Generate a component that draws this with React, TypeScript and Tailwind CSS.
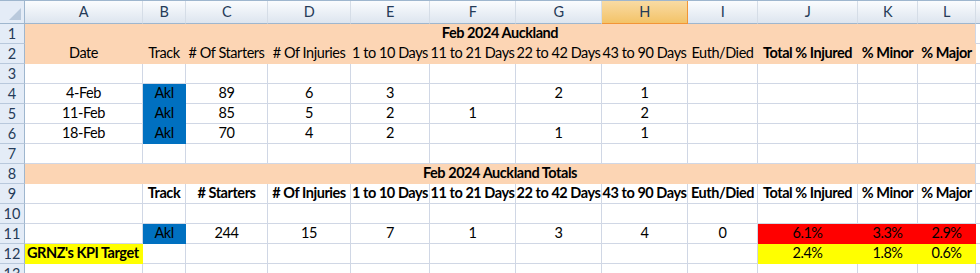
import React from 'react';

type Fill = 'peach' | 'blue' | 'red' | 'yellow';

type Cell = {
    t?: string;
    b?: boolean;
    f?: Fill;
    left?: boolean;
};

type Row =
    | { kind: 'title'; text: string }
    | { kind: 'cells'; cells: Cell[]; headerLine?: boolean };

const columns = ['A', 'B', 'C', 'D', 'E', 'F', 'G', 'H', 'I', 'J', 'K', 'L'];

const fillClass: Record<Fill, string> = {
    peach: 'bg-[#fcd5b4] border-r-[#fcd5b4] border-b-[#fcd5b4]',
    blue: 'bg-[#0070c0] border-r-[#0070c0] border-b-[#0070c0]',
    red: 'bg-[#ff0000] border-r-[#ff0000] border-b-[#ff0000]',
    yellow: 'bg-[#ffff00] border-r-[#ffff00] border-b-[#ffff00]',
};

const headings = ['1 to 10 Days', '11 to 21 Days', '22 to 42 Days', '43 to 90 Days', 'Euth/Died'];

const rows: Row[] = [
    { kind: 'title', text: 'Feb 2024 Auckland' },
    {
        kind: 'cells',
        headerLine: true,
        cells: [
            { t: 'Date' },
            { t: 'Track' },
            { t: '# Of Starters' },
            { t: '# Of Injuries' },
            ...headings.map((t) => ({ t })),
            { t: 'Total % Injured', b: true },
            { t: '% Minor', b: true },
            { t: '% Major', b: true },
        ].map((c) => ({ ...c, f: 'peach' as Fill })),
    },
    { kind: 'cells', cells: [] },
    {
        kind: 'cells',
        cells: [{ t: '4-Feb' }, { t: 'Akl', f: 'blue' }, { t: '89' }, { t: '6' }, { t: '3' }, {}, { t: '2' }, { t: '1' }],
    },
    {
        kind: 'cells',
        cells: [{ t: '11-Feb' }, { t: 'Akl', f: 'blue' }, { t: '85' }, { t: '5' }, { t: '2' }, { t: '1' }, {}, { t: '2' }],
    },
    {
        kind: 'cells',
        cells: [{ t: '18-Feb' }, { t: 'Akl', f: 'blue' }, { t: '70' }, { t: '4' }, { t: '2' }, {}, { t: '1' }, { t: '1' }],
    },
    { kind: 'cells', cells: [] },
    { kind: 'title', text: 'Feb 2024 Auckland Totals' },
    {
        kind: 'cells',
        cells: [
            {},
            { t: 'Track', b: true },
            { t: '# Starters', b: true },
            { t: '# Of Injuries', b: true },
            ...headings.map((t) => ({ t, b: true })),
            { t: 'Total % Injured', b: true },
            { t: '% Minor', b: true },
            { t: '% Major', b: true },
        ],
    },
    { kind: 'cells', cells: [] },
    {
        kind: 'cells',
        cells: [
            {},
            { t: 'Akl', f: 'blue' },
            { t: '244' },
            { t: '15' },
            { t: '7' },
            { t: '1' },
            { t: '3' },
            { t: '4' },
            { t: '0' },
            { t: '6.1%', f: 'red' },
            { t: '3.3%', f: 'red' },
            { t: '2.9%', f: 'red' },
        ],
    },
    {
        kind: 'cells',
        cells: [
            { t: "GRNZ's KPI Target", b: true, f: 'yellow', left: true },
            {},
            {},
            {},
            {},
            {},
            {},
            {},
            {},
            { t: '2.4%', f: 'yellow' },
            { t: '1.8%', f: 'yellow' },
            { t: '0.6%', f: 'yellow' },
        ],
    },
    { kind: 'cells', cells: [] },
];

const rowHead =
    'flex items-center justify-center border-r border-b border-r-[#9eb6ce] border-b-[#b8c8dc] bg-[#e4ecf7] text-[#253b58] tracking-normal';

function ColumnHeader({ label }: { label: string }) {
    const active = label === 'H';
    return (
        <div
            className={
                active
                    ? 'flex items-center justify-center border-r border-b border-[#f29536] bg-gradient-to-b from-[#f9dba3] to-[#f3c367] text-[#253b58]'
                    : 'flex items-center justify-center border-r border-b border-r-[#d5dde7] border-b-[#9eb6ce] bg-gradient-to-b from-[#fafcfe] to-[#dde5ef] text-[#253b58]'
            }
        >
            {label}
        </div>
    );
}

function SheetCell({ cell, last, headerLine }: { cell: Cell; last: boolean; headerLine?: boolean }) {
    const base = 'flex items-end whitespace-nowrap border-r border-b leading-[18px] pb-[1px]';
    const colour = cell.f ? fillClass[cell.f] : 'border-r-[#d0d7e5] border-b-[#d0d7e5]';
    return (
        <div
            className={[
                base,
                colour,
                cell.left ? 'justify-start pl-[2px]' : 'justify-center',
                cell.b ? 'font-bold' : '',
                last ? 'border-r-[#d0d7e5]' : '',
                headerLine ? 'border-b-[#6f6f6f]' : '',
            ].join(' ')}
        >
            {cell.t}
        </div>
    );
}

export default function App() {
    return (
        <div className="h-[273px] w-[980px] overflow-hidden bg-white font-['Lato','Liberation_Sans',sans-serif] text-[14.5px] tracking-[-0.45px] text-black">
            <div className="grid grid-cols-[25px_118px_43px_82px_83px_79px_86px_86px_86px_70px_100px_60px_58px_1fr] grid-rows-[23px_repeat(13,20px)] border-t border-[#9eb6ce]">
                {/* corner */}
                <div className="relative border-r border-b border-[#9eb6ce] bg-[#e4ecf7]">
                    <svg className="absolute bottom-[3px] right-[3px]" width="12" height="12" viewBox="0 0 12 12">
                        <polygon points="12,0 12,12 0,12" fill="#b9c9dc" />
                    </svg>
                </div>
                {columns.map((c) => (
                    <ColumnHeader key={c} label={c} />
                ))}
                <div className="border-b border-[#9eb6ce] bg-gradient-to-b from-[#fafcfe] to-[#dde5ef]" />

                {rows.map((row, i) => (
                    <React.Fragment key={i}>
                        <div className={rowHead}>{i + 1}</div>
                        {row.kind === 'title' ? (
                            <div className="col-span-12 flex items-end justify-center border-r border-b border-r-[#d0d7e5] border-b-[#fcd5b4] bg-[#fcd5b4] pb-[1px] font-bold leading-[18px]">
                                {row.text}
                            </div>
                        ) : (
                            columns.map((c, j) => (
                                <SheetCell
                                    key={c}
                                    cell={row.cells[j] ?? {}}
                                    last={j === columns.length - 1}
                                    headerLine={row.headerLine}
                                />
                            ))
                        )}
                        <div className="border-b border-[#d0d7e5]" />
                    </React.Fragment>
                ))}
            </div>
        </div>
    );
}
